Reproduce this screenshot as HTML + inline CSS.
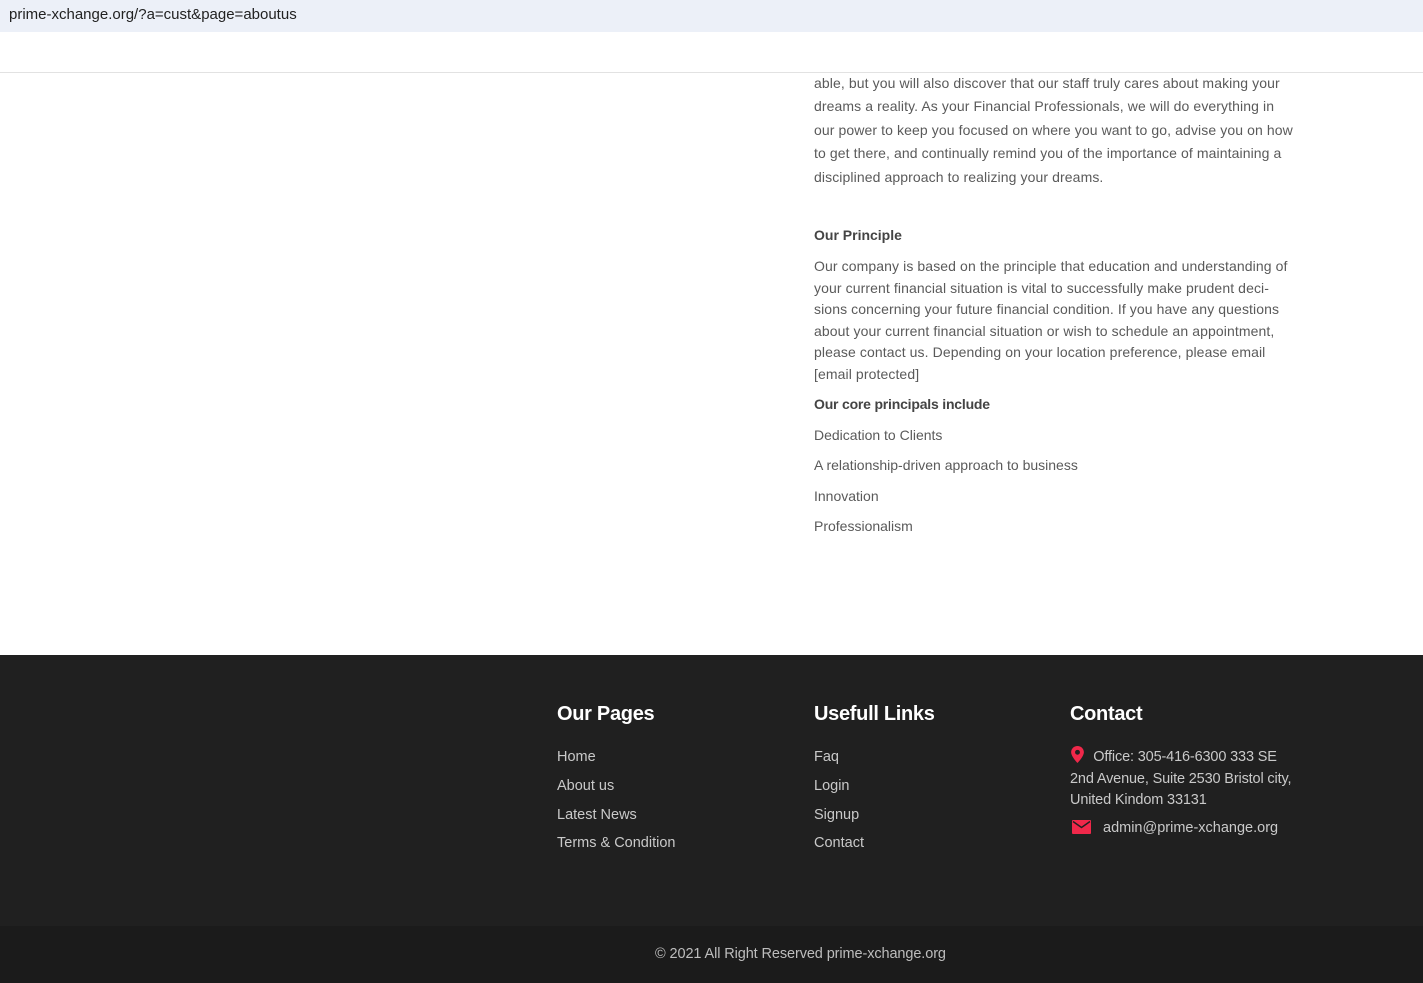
<!DOCTYPE html>
<html><head><meta charset="utf-8"><style>
body{margin:0;width:1423px;height:983px;position:relative;overflow:hidden;background:#fff;font-family:"Liberation Sans",sans-serif;}
.a{position:absolute;white-space:nowrap}
.t{color:#5a5a5a;font-size:14px;}
.b{color:#444;font-size:14px;font-weight:bold}
.f{color:#c9c9c9;font-size:14.5px}
.h{color:#fff;font-size:20px;font-weight:bold;letter-spacing:-0.3px}
</style></head><body>
<div class="a" style="left:0;top:0;width:1423px;height:32px;background:#ecf0f8"></div>
<div class="a" style="left:9px;top:6px;font-size:15px;color:#222">prime-xchange.org/?a=cust&amp;page=aboutus</div>
<div class="a" style="left:0;top:72px;width:1423px;height:1px;background:#e2e2e2"></div>

<div class="a t" style="left:814px;top:72px;line-height:23.4px;letter-spacing:0.1px">able, but you will also discover that our staff truly cares about making your<br>dreams a reality. As your Financial Professionals, we will do everything in<br>our power to keep you focused on where you want to go, advise you on how<br>to get there, and continually remind you of the importance of maintaining a<br>disciplined approach to realizing your dreams.</div>
<div class="a b" style="left:814px;top:227px">Our Principle</div>
<div class="a t" style="left:814px;top:256px;line-height:21.6px;letter-spacing:0.1px">Our company is based on the principle that education and understanding of<br>your current financial situation is vital to successfully make prudent deci-<br>sions concerning your future financial condition. If you have any questions<br>about your current financial situation or wish to schedule an appointment,<br>please contact us. Depending on your location preference, please email<br>[email&#160;protected]</div>
<div class="a b" style="left:814px;top:396px;letter-spacing:-0.2px">Our core principals include</div>
<div class="a t" style="left:814px;top:427px">Dedication to Clients</div>
<div class="a t" style="left:814px;top:457px">A relationship-driven approach to business</div>
<div class="a t" style="left:814px;top:488px">Innovation</div>
<div class="a t" style="left:814px;top:518px">Professionalism</div>

<div class="a" style="left:0;top:655px;width:1423px;height:271px;background:#202020"></div>
<div class="a" style="left:0;top:926px;width:1423px;height:57px;background:#1b1b1b"></div>

<div class="a h" style="left:557px;top:703px">Our Pages</div>
<div class="a f" style="left:557px;top:749px">Home</div>
<div class="a f" style="left:557px;top:778px">About us</div>
<div class="a f" style="left:557px;top:807px">Latest News</div>
<div class="a f" style="left:557px;top:835px">Terms &amp; Condition</div>

<div class="a h" style="left:814px;top:703px">Usefull Links</div>
<div class="a f" style="left:814px;top:749px">Faq</div>
<div class="a f" style="left:814px;top:778px">Login</div>
<div class="a f" style="left:814px;top:807px">Signup</div>
<div class="a f" style="left:814px;top:835px">Contact</div>

<div class="a h" style="left:1070px;top:703px">Contact</div>
<svg class="a" style="left:1071px;top:746px" width="13" height="17" viewBox="0 0 12 16"><path d="M6 0C2.7 0 0 2.6 0 5.8 0 10 6 16 6 16s6-6 6-10.2C12 2.6 9.3 0 6 0zm0 8.2A2.3 2.3 0 1 1 6 3.6a2.3 2.3 0 0 1 0 4.6z" fill="#f0284a"/></svg>
<div class="a f" style="left:1070px;top:747px;line-height:21.5px;letter-spacing:-0.15px">&#160;&#160;&#160;&#160;&#160;&#160;Office: 305-416-6300 333 SE<br>2nd Avenue, Suite 2530 Bristol city,<br>United Kindom 33131</div>
<svg class="a" style="left:1072px;top:820px" width="19" height="14" viewBox="0 0 19 14"><rect width="19" height="14" rx="1" fill="#f0284a"/><path d="M1 1.5l8.5 6 8.5-6" stroke="#202020" stroke-width="1.5" fill="none"/></svg>
<div class="a f" style="left:1103px;top:820px">admin@prime-xchange.org</div>

<div class="a f" style="left:655px;top:946px;color:#bdbdbd;letter-spacing:-0.1px">© 2021 All Right Reserved prime-xchange.org</div>
</body></html>
